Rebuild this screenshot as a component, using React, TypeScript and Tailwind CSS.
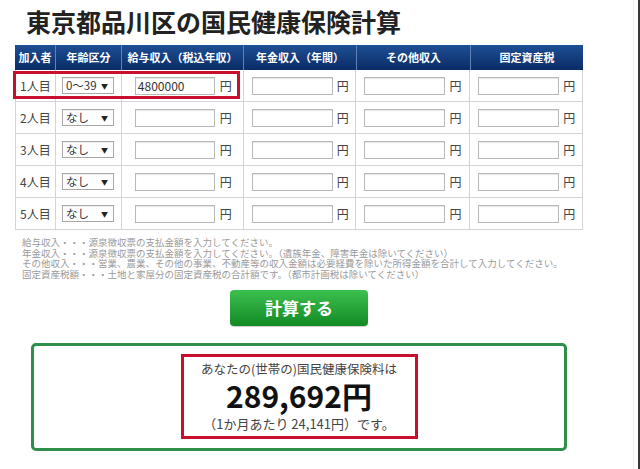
import React from "react";

const headers = ["加入者", "年齢区分", "給与収入（税込年収）", "年金収入（年間）", "その他収入", "固定資産税"];
const widths = ["w-[40px]", "w-[66px]", "w-[122px]", "w-[113px]", "w-[114px]", "w-[113px]"];

function Sel({ v }: { v: string }) {
  return (
    <div className="relative w-[52px] h-[17px] border border-[#a9a9a9] bg-white shadow-[inset_0_1px_1px_rgba(0,0,0,0.08)] text-[11.5px] leading-[15px] text-[#333] pl-[3px]">
      {v}
      <span className="absolute right-[5px] top-[1px] text-[7px] leading-[15px] text-[#222]">▼</span>
    </div>
  );
}

function Inp({ v, w }: { v?: string; w: string }) {
  return (
    <div className={`${w} h-[18px] border border-[#b9b9b9] bg-white shadow-[inset_0_1px_1px_rgba(0,0,0,0.1)] text-[12px] leading-[16px] text-[#333] pl-[2px]`}>
      {v}
    </div>
  );
}

function Row({ n, age, salary, first }: { n: number; age: string; salary?: string; first?: boolean }) {
  return (
    <div className="relative flex h-[32px] border-b border-l border-[#d4d4d4]">
      <div className={`${widths[0]} border-r border-[#d4d4d4] flex items-center pl-[4px] text-[12px] text-[#444]`}>{n}人目</div>
      <div className={`${widths[1]} border-r border-[#d4d4d4] flex items-center pl-[6px]`}>
        <Sel v={age} />
      </div>
      <div className={`${widths[2]} border-r border-[#d4d4d4] flex items-center pl-[13px] gap-[5px]`}>
        <Inp v={salary} w="w-[80px]" />
        <span className="text-[12px] text-[#444]">円</span>
      </div>
      <div className={`${widths[3]} border-r border-[#d4d4d4] flex items-center pl-[8px] gap-[4px]`}>
        <Inp w="w-[81px]" />
        <span className="text-[12px] text-[#444]">円</span>
      </div>
      <div className={`${widths[4]} border-r border-[#d4d4d4] flex items-center pl-[8px] gap-[4px]`}>
        <Inp w="w-[81px]" />
        <span className="text-[12px] text-[#444]">円</span>
      </div>
      <div className={`${widths[5]} border-r border-[#d4d4d4] flex items-center pl-[8px] gap-[4px]`}>
        <Inp w="w-[81px]" />
        <span className="text-[12px] text-[#444]">円</span>
      </div>
      {first && (
        <div className="absolute left-[-3px] top-[1px] w-[227px] h-[28px] border-[3px] border-[#c8102e] pointer-events-none" />
      )}
    </div>
  );
}

export default function App() {
  return (
    <div className="w-[640px] h-[469px] bg-white border-r-2 border-[#3a3a3a] font-['Noto_Sans_CJK_JP',sans-serif] overflow-hidden">
      <div className="w-[634px] h-full border-r border-[#eeeeee]">
        <h1 className="pt-[5px] pl-[26px] text-[25px] leading-[32px] font-bold text-[#222]">東京都品川区の国民健康保険計算</h1>
        <div className="ml-[15px] w-[568px] mt-[8px]">
          <div className="flex h-[25px] bg-linear-to-b from-[#1e4f95] to-[#0a2c66]">
            {headers.map((h, i) => (
              <div
                key={h}
                className={`${widths[i]} ${i > 0 ? "border-l border-[#5f82b8]" : ""} flex items-center justify-center text-[11px] font-bold text-white whitespace-nowrap`}
              >
                {h}
              </div>
            ))}
          </div>
          <Row n={1} age="0～39" salary="4800000" first />
          <Row n={2} age="なし" />
          <Row n={3} age="なし" />
          <Row n={4} age="なし" />
          <Row n={5} age="なし" />
          <div className="mt-[7px] pl-[7px] text-[9.5px] leading-[10.5px] text-[#9a9a9a] whitespace-nowrap">
            <div>給与収入・・・源泉徴収票の支払金額を入力してください。</div>
            <div>年金収入・・・源泉徴収票の支払金額を入力してください。（遺族年金、障害年金は除いてください）</div>
            <div>その他収入・・・営業、農業、その他の事業、不動産等の収入金額は必要経費を除いた所得金額を合計して入力してください。</div>
            <div>固定資産税額・・・土地と家屋分の固定資産税の合計額です。（都市計画税は除いてください）</div>
          </div>
          <div className="flex justify-center mt-[11px]">
            <div className="w-[138px] h-[36px] rounded-[4px] bg-linear-to-b from-[#3cc04f] to-[#118a25] flex items-center justify-center text-white font-bold text-[17px] shadow-[0_1px_1px_rgba(0,0,0,0.2)]">
              計算する
            </div>
          </div>
          <div className="mx-[16px] mt-[17px] h-[108px] border-[3px] border-[#2f8f4a] rounded-[5px] pt-[8px]">
            <div className="mx-auto w-[237px] h-[85px] border-[3px] border-[#c8102e] flex flex-col items-center pt-[4px]">
              <div className="text-[12.5px] leading-[16px] text-[#444] whitespace-nowrap">あなたの(世帯の)国民健康保険料は</div>
              <div className="text-[30px] leading-[36px] font-bold text-[#111]">289,692円</div>
              <div className="mt-[2px] text-[13px] leading-[18px] text-[#444] whitespace-nowrap">（1か月あたり 24,141円）です。</div>
            </div>
          </div>
        </div>
      </div>
    </div>
  );
}
